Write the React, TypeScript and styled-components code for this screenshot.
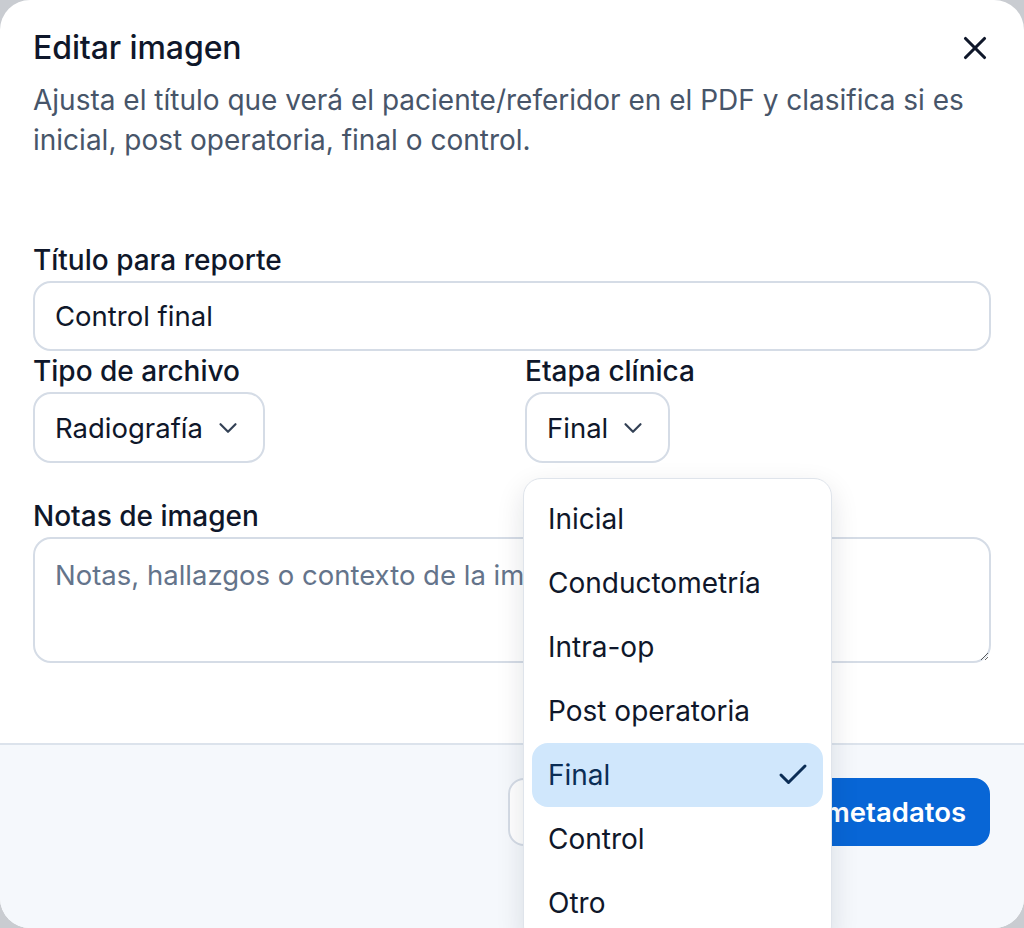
import React from "react";
import styled, { createGlobalStyle } from "styled-components";
import { X, ChevronDown, Check } from "lucide-react";

const GlobalStyle = createGlobalStyle`
  html, body { margin: 0; padding: 0; }
  body {
    background: #c9ccd1;
    font-family: Inter, "Noto Sans", sans-serif;
    -webkit-font-smoothing: antialiased;
  }
  * { box-sizing: border-box; }
`;

const Dialog = styled.div`
  width: 1024px;
  height: 928px;
  background: #ffffff;
  border-radius: 30px;
  overflow: hidden;
  display: flex;
  flex-direction: column;
  position: relative;
`;

const Header = styled.div`
  padding: 28px 33px 0;
  display: flex;
  flex-direction: column;
  gap: 12px;
`;

const TitleRow = styled.div`
  display: flex;
  align-items: center;
  justify-content: space-between;
`;

const Title = styled.h2`
  margin: 0;
  font-size: 32px;
  line-height: 40px;
  font-weight: 500;
  color: #0f172a;
  letter-spacing: -0.1px;
`;

const CloseButton = styled.button`
  border: none;
  background: transparent;
  padding: 0;
  margin-right: -4px;
  width: 40px;
  height: 40px;
  display: flex;
  align-items: center;
  justify-content: center;
  color: #0f172a;
  cursor: pointer;
`;

const Description = styled.p`
  margin: 0;
  font-size: 28px;
  line-height: 40px;
  color: #475569;
`;

const Form = styled.div`
  padding: 80px 33px 80px;
  display: flex;
  flex-direction: column;
`;

const Field = styled.div<{ $mt?: number }>`
  display: flex;
  flex-direction: column;
  margin-top: ${(p) => p.$mt ?? 0}px;
  position: relative;
`;

const Label = styled.label`
  font-size: 28px;
  line-height: 40px;
  font-weight: 500;
  color: #0f172a;
  margin-bottom: 1px;
`;

const TextInput = styled.input`
  height: 70px;
  width: 100%;
  border: 2px solid #d5dce6;
  border-radius: 18px;
  padding: 0 20px;
  font-family: inherit;
  font-size: 27.5px;
  color: #0f172a;
  background: #fff;
  outline: none;
`;

const Row = styled.div`
  display: grid;
  grid-template-columns: 1fr 1fr;
  column-gap: 26px;
`;

const SelectTrigger = styled.button`
  align-self: flex-start;
  height: 71px;
  border: 2px solid #d5dce6;
  border-radius: 18px;
  background: #fff;
  padding: 0 20px;
  display: inline-flex;
  align-items: center;
  gap: 10px;
  font-family: inherit;
  font-size: 27.5px;
  color: #0f172a;
  cursor: pointer;
  svg { color: #334155; }
`;

const TextArea = styled.textarea`
  height: 126px;
  width: 100%;
  border: 2px solid #d5dce6;
  border-radius: 18px;
  padding: 16px 20px;
  font-family: inherit;
  font-size: 27.5px;
  line-height: 40px;
  color: #0f172a;
  background: #fff;
  outline: none;
  resize: vertical;
  &::placeholder { color: #64748b; }
`;

const Footer = styled.div`
  flex: 1;
  border-top: 2px solid #dce3ec;
  background: #f5f8fc;
  display: flex;
  justify-content: flex-end;
  align-items: flex-start;
  gap: 12px;
  padding: 33px 34px 0;
`;

const Button = styled.button<{ $primary?: boolean }>`
  height: 68px;
  padding: 0 22px;
  border-radius: 16px;
  font-family: inherit;
  font-size: 27.5px;
  font-weight: 600;
  cursor: pointer;
  border: 2px solid ${(p) => (p.$primary ? "#0866d6" : "#d5dce6")};
  background: ${(p) => (p.$primary ? "#0866d6" : "#ffffff")};
  color: ${(p) => (p.$primary ? "#ffffff" : "#0f172a")};
`;

const Menu = styled.div`
  position: absolute;
  top: calc(100% + 15px);
  left: -2px;
  width: 309px;
  background: #ffffff;
  border: 1px solid #dfe4eb;
  border-radius: 18px;
  padding: 8px;
  box-shadow: 0 10px 28px rgba(15, 23, 42, 0.12);
  z-index: 10;
  display: flex;
  flex-direction: column;
`;

const Option = styled.div<{ $selected?: boolean }>`
  height: 64px;
  border-radius: 16px;
  padding: 0 12px 0 16px;
  display: flex;
  align-items: center;
  justify-content: space-between;
  font-size: 28px;
  color: ${(p) => (p.$selected ? "#0b2d55" : "#0f172a")};
  background: ${(p) => (p.$selected ? "#d0e7fc" : "transparent")};
  svg { color: #0b2d55; }
`;

const options = [
  "Inicial",
  "Conductometría",
  "Intra-op",
  "Post operatoria",
  "Final",
  "Control",
  "Otro",
];

export default function App() {
  return (
    <>
      <GlobalStyle />
      <Dialog>
        <Header>
          <TitleRow>
            <Title>Editar imagen</Title>
            <CloseButton aria-label="Cerrar">
              <X size={38} strokeWidth={2} />
            </CloseButton>
          </TitleRow>
          <Description>
            Ajusta el título que verá el paciente/referidor en el PDF y clasifica si es
            inicial, post operatoria, final o control.
          </Description>
        </Header>
        <Form>
          <Field>
            <Label>Título para reporte</Label>
            <TextInput readOnly value="Control final" />
          </Field>
          <Row>
            <Field>
              <Label>Tipo de archivo</Label>
              <SelectTrigger>
                Radiografía
                <ChevronDown size={30} strokeWidth={1.75} />
              </SelectTrigger>
            </Field>
            <Field>
              <Label>Etapa clínica</Label>
              <SelectTrigger>
                Final
                <ChevronDown size={30} strokeWidth={1.75} />
              </SelectTrigger>
              <Menu>
                {options.map((o) => (
                  <Option key={o} $selected={o === "Final"}>
                    {o}
                    {o === "Final" && <Check size={36} strokeWidth={2} />}
                  </Option>
                ))}
              </Menu>
            </Field>
          </Row>
          <Field $mt={33}>
            <Label>Notas de imagen</Label>
            <TextArea placeholder="Notas, hallazgos o contexto de la imagen" />
          </Field>
        </Form>
        <Footer>
          <Button>Cancelar</Button>
          <Button $primary>Guardar metadatos</Button>
        </Footer>
      </Dialog>
    </>
  );
}
